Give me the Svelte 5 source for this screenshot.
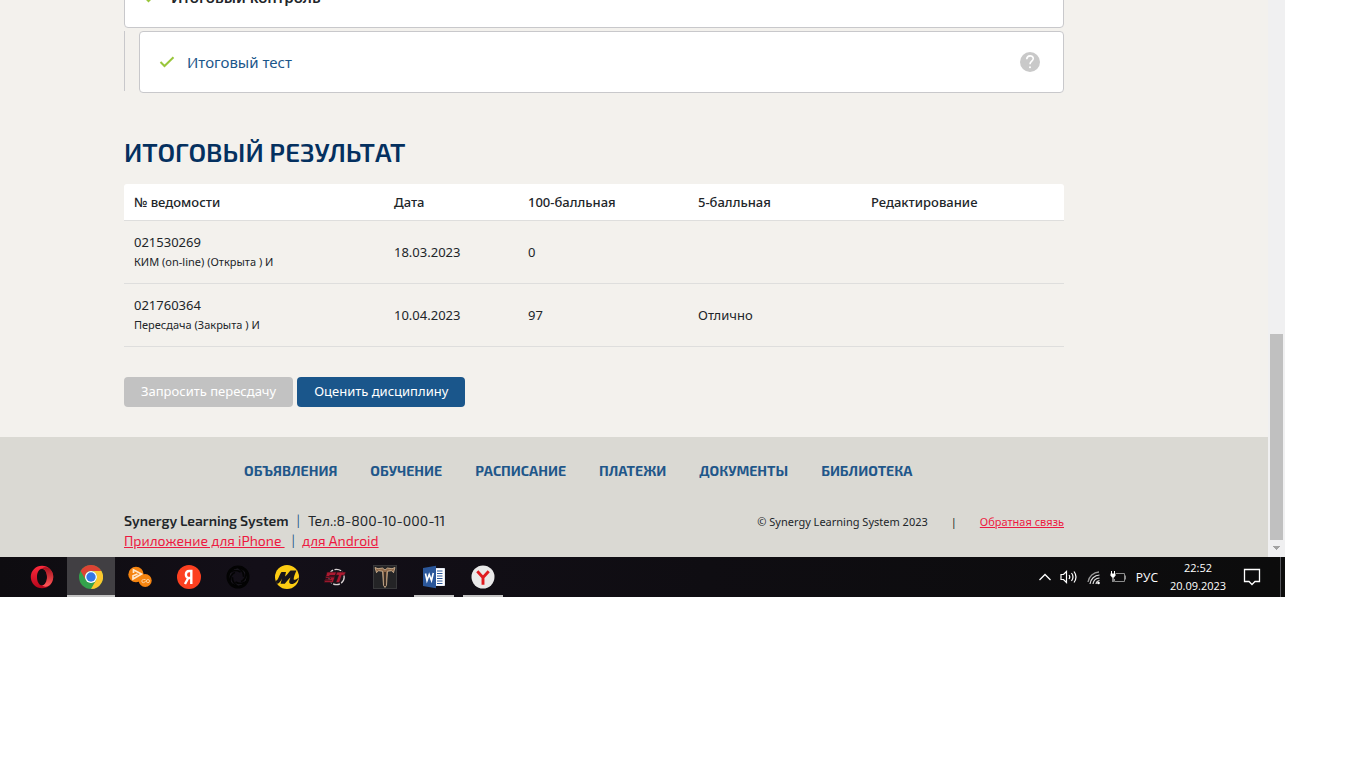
<script>
  const columns = [
    { label: '№ ведомости', width: 260 },
    { label: 'Дата', width: 134 },
    { label: '100-балльная', width: 170 },
    { label: '5-балльная', width: 173 },
    { label: 'Редактирование', width: null }
  ];
  const results = [
    { number: '021530269', note: 'КИМ (on-line) (Открыта ) И', date: '18.03.2023', score: '0', grade: '' },
    { number: '021760364', note: 'Пересдача (Закрыта ) И', date: '10.04.2023', score: '97', grade: 'Отлично' }
  ];
  const menu = ['Объявления', 'Обучение', 'Расписание', 'Платежи', 'Документы', 'Библиотека'];
  const apps = [
    { id: 'opera', name: 'Opera' },
    { id: 'chrome', name: 'Chrome', active: true },
    { id: 'player', name: 'Player' },
    { id: 'yandex', name: 'Яндекс' },
    { id: 'shutter', name: 'Shutter' },
    { id: 'market', name: 'M' },
    { id: 'bt', name: 'BT' },
    { id: 'tera', name: 'T' },
    { id: 'word', name: 'Word', open: true },
    { id: 'browser', name: 'Yandex Browser', open: true }
  ];
</script>

{#snippet check()}
  <svg class="check" width="16" height="12" viewBox="0 0 16 12" aria-hidden="true">
    <path d="M1.500 6l4 4L14.500 1.300" fill="none" stroke="#99c63b" stroke-width="2" />
  </svg>
{/snippet}

<div class="desktop">
  <div class="viewport">
    <div class="page">
      <main>
        <div class="lessons">
          <div class="card"><span class="mark">{@render check()}</span><strong>Итоговый контроль</strong></div>
          <div class="nested">
            <div class="card">
              <span class="mark">{@render check()}</span>
              <a href="#test">Итоговый тест</a>
              <button class="help" aria-label="Справка">
                <svg width="20" height="20" viewBox="0 0 20 20" aria-hidden="true">
                  <circle cx="10" cy="10" r="10" fill="#c9c9c9" />
                  <path d="M6.700 7.300C6.900 2.700 13.300 2.900 13.300 6.600c0 2.500-3.300 2.700-3.300 5.600" fill="none" stroke="#fff" stroke-width="1.600" />
                  <circle cx="10" cy="15.200" r="1" fill="#fff" />
                </svg>
              </button>
            </div>
          </div>
        </div>

        <h1>Итоговый результат</h1>
        <table>
          <colgroup>
            {#each columns as c}<col style:width={c.width ? `${c.width}px` : 'auto'} />{/each}
          </colgroup>
          <thead>
            <tr>{#each columns as c}<th scope="col">{c.label}</th>{/each}</tr>
          </thead>
          <tbody>
            {#each results as r}
              <tr>
                <td>{r.number}<small>{r.note}</small></td>
                <td>{r.date}</td>
                <td>{r.score}</td>
                <td>{r.grade}</td>
                <td></td>
              </tr>
            {/each}
          </tbody>
        </table>
        <div class="actions">
          <button disabled>Запросить пересдачу</button>
          <button>Оценить дисциплину</button>
        </div>
      </main>

      <footer>
        <nav>
          {#each menu as item}<a href="#menu">{item}</a>{/each}
        </nav>
        <div class="info">
          <div class="contacts">
            <div><b>Synergy Learning System</b><i>|</i><span>Тел.:8-800-10-000-11</span></div>
            <div class="apps"><a href="#iphone">Приложение для iPhone&nbsp;</a><i>|</i><a href="#android">для Android</a></div>
          </div>
          <div class="legal"><span>© Synergy Learning System 2023</span><span>|</span><a href="#feedback">Обратная связь</a></div>
        </div>
      </footer>
    </div>
    <div class="scrollbar" aria-hidden="true">
      <div class="thumb"></div>
      <svg width="17" height="17" viewBox="0 0 17 17"><path d="M5 6h7v1h-1v1h-1v1h-1v1H8V9H7V8H6V7H5z" fill="#a3a3a3" /></svg>
    </div>
  </div>

  <div class="taskbar">
    <div class="programs">
      {#each apps as app}
        <button class:active={app.active} class:open={app.open} aria-label={app.name}>
          <svg width="24" height="24" viewBox="0 0 24 24" aria-hidden="true">
            {#if app.id === 'opera'}
              <defs>
                <linearGradient id="op1" x1="0" y1="0" x2="0" y2="1"><stop stop-color="#ff2a3c" /><stop offset="1" stop-color="#b5061b" /></linearGradient>
                <linearGradient id="op2" x1="0" y1="0" x2="0" y2="1"><stop stop-color="#a5101c" /><stop offset="1" stop-color="#ff5a5a" /></linearGradient>
              </defs>
              <path fill-rule="evenodd" d="M12 .8a11.200 11.200 0 1 0 0 22.400 11.200 11.200 0 0 0 0-22.400zM12 3.700c3 0 5 3.700 5 8.300s-2 8.300-5 8.300-5-3.700-5-8.300 2-8.300 5-8.300z" fill="url(#op1)" />
              <path d="M12 3.700C14 1.800 17 2 19.200 3.400a11.200 11.200 0 0 1 0 17.200C17 22 14 22.200 12 20.300c3 0 5-3.700 5-8.300s-2-8.300-5-8.300z" fill="url(#op2)" />
            {:else if app.id === 'chrome'}
              <circle cx="12" cy="12" r="12" fill="#34a24c" />
              <path d="M1.600 6A12 12 0 0 1 22.400 6H12a6 6 0 0 0-5.200 9z" fill="#dd4334" />
              <path d="M22.400 6A12 12 0 0 1 12 24l5.200-9A6 6 0 0 0 12 6z" fill="#fdc72e" />
              <circle cx="12" cy="12" r="6" fill="#fff" />
              <circle cx="12" cy="12" r="4.700" fill="#3577e5" />
            {:else if app.id === 'player'}
              <circle cx="8" cy="9.500" r="7.700" fill="#f58410" />
              <circle cx="17.200" cy="15.500" r="6.500" fill="#f58410" />
              <path d="M5.500 8V4.800L13.500 9 5 14v-3.200L9.500 9" fill="none" stroke="#ffe8cd" stroke-width="1.700" />
              <path d="M17.500 14.500h-2a1.600 1.600 0 1 0 1.500 1.800h.8M20 14.500a1.600 1.600 0 1 1-.1 3.200 1.600 1.600 0 0 1 .1-3.200z" fill="none" stroke="#ffcf98" stroke-width="1" />
            {:else if app.id === 'yandex'}
              <circle cx="12" cy="12" r="12" fill="#fc4020" />
              <path d="M14.300 19V6h-2c-4.500 0-4.500 7-.2 7h2.200M11.500 12.500L8 19" fill="none" stroke="#fff" stroke-width="2.400" />
            {:else if app.id === 'shutter'}
              <circle cx="12" cy="12" r="10" fill="none" stroke="#030303" stroke-width="3" />
              <circle cx="12" cy="12" r="8" fill="none" stroke="#201e24" stroke-width=".7" />
              <g fill="none" stroke="#030303" stroke-width="1.600">
                {#each [0, 60, 120, 180, 240, 300] as turn}<path d="M4.500 7q5-3 10 0" transform="rotate({turn} 12 12)" />{/each}
              </g>
            {:else if app.id === 'market'}
              <circle cx="12" cy="12" r="12" fill="#fccc12" />
              <path d="M.5 16C3.500 15.500 4.500 9 6.500 7H11L10 11.500C12 10 13.500 7.500 15.500 5.500H21.500C20 9 18.500 12.500 18.700 14.500 20.500 15.500 22 14 24 12.500 22 17 18 20.500 15 18.500 13.500 17.500 14.500 14.500 15.500 12.500 13 14.500 11.500 17 9.800 18.800H5.500L7 13.500C5.500 16.500 3.500 20 1.500 18.500z" fill="#18151a" />
            {:else if app.id === 'bt'}
              <circle cx="12.500" cy="12" r="7.700" fill="#18151b" stroke="#d8d1d3" stroke-width="1.300" stroke-dasharray="7 1.500" />
              <path d="M3 7h10l-1.500 3.500H5.500L4.800 12H11l-2 5.500H0l1.200-3.300H6l.5-1H1.300zM12.500 7H22l-1.700 3.300h-2.500L15.500 17.500h-3.700l2.700-7.200h-3.200z" fill="#ad1930" stroke="#241018" stroke-width=".7" />
              <path d="M2 11.500h9M0 15.700h8" stroke="#4b101b" />
            {:else if app.id === 'tera'}
              <path d="M0 0h24v24H0z" fill="#38383a" />
              <path d="M1 1h22v22H1z" fill="#242426" />
              <path d="M2 2.500l3 1.200 4.500-.7L12 5l2.500-2 4.500.7 3-1.200-1.500 5.200-2-2-4 .6-1 14-1.500 2.200-1.500-2.200-1-14-4-.6-2 2z" fill="#8e694b" stroke="#e8cba8" stroke-width=".7" />
              <path d="M12 7v14" stroke="#1b1817" stroke-width="1.400" />
            {:else if app.id === 'word'}
              <path d="M13 3.500h9.500v17H13z" fill="#fff" stroke="#e4eaf4" />
              <path d="M15 6h5.500M15 8.500h5.500M15 11h5.500M15 13.500h5.500M15 16h5.500M15 18.500h5.500" stroke="#2b579a" />
              <path d="M1 3L14 .7v22.600L1 21z" fill="#2b579a" />
              <path d="M3.500 8.500l1.500 7 2.200-6 2.300 6 1.800-7.500" fill="none" stroke="#fff" stroke-width="1.600" />
            {:else}
              <circle cx="12" cy="12" r="11.500" fill="#e9e9e9" />
              <path d="M6.300 6.300L12 12.500v7.300M17.700 6.300L12 12.500" fill="none" stroke="#e01c20" stroke-width="2.900" />
            {/if}
          </svg>
        </button>
      {/each}
    </div>
    <div class="tray">
      <svg width="12" height="16" viewBox="0 0 12 16" aria-hidden="true"><path d="M.5 11L6 5.500 11.500 11" fill="none" stroke="#fff" stroke-width="1.300" /></svg>
      <svg width="18" height="16" viewBox="0 0 18 16" aria-hidden="true">
        <path d="M1 5.500h2.500L6.500 2.500v11l-3-3H1zM9 6q1.500 2 0 4M11.500 4q3 4 0 8M14 2.500q4 5.500 0 11" fill="none" stroke="#fff" stroke-width="1.200" />
      </svg>
      <svg width="14" height="16" viewBox="0 0 14 16" aria-hidden="true">
        <path d="M1 13A12 12 0 0 1 12 3" fill="none" stroke="#999" stroke-width="1.300" />
        <path d="M3 15A10 10 0 0 1 12.500 6M6 15a7 7 0 0 1 6.500-6M9 15a4 4 0 0 1 3.500-3.500" fill="none" stroke="#ddd" stroke-width="1.200" />
        <circle cx="11.500" cy="14" r="1.300" fill="#fff" />
      </svg>
      <svg width="17" height="16" viewBox="0 0 17 16" aria-hidden="true">
        <path d="M6 4.500h8.500v8H4.500V10M15.500 6.500v4" fill="none" stroke="#8c8c8c" />
        <path d="M1.500 2v3M4.500 2v3M3 8v5" stroke="#fff" /><path d="M.5 4.500h5v2L4 8.500H2L.5 6.500z" fill="#fff" />
      </svg>
      <span class="lang">РУС</span>
      <div class="clock"><span>22:52</span><span>20.09.2023</span></div>
      <svg width="18" height="18" viewBox="0 0 18 18" aria-hidden="true"><path d="M1.500 1.500h15v12H12l-3 3-3-3H1.500z" fill="none" stroke="#fff" stroke-width="1.300" /></svg>
    </div>
  </div>
</div>

<style>
  :global(body) {
    margin: 0;
    background: #fff;
  }
  .desktop {
    margin-right: 81px;
    overflow: hidden;
    font-family: "Noto Sans", "Open Sans", sans-serif;
    font-size: 13px;
    color: #212529;
  }
  button {
    border: 0;
    padding: 0;
    font: inherit;
  }
  svg {
    display: block;
    flex: none;
  }
  .viewport {
    display: flex;
  }
  .page {
    flex: 1;
    min-width: 0;
    background: #f3f1ed;
  }
  main {
    padding: 0 204px 30px 124px;
  }
  .lessons {
    display: flex;
    flex-direction: column;
    gap: 3px;
    margin-top: -34px;
  }
  .card {
    display: flex;
    align-items: center;
    box-sizing: border-box;
    min-height: 62px;
    flex: 1;
    padding: 0 23px 0 19px;
    border: 1px solid #c8c8cb;
    border-radius: 4px;
    background: #fff;
    font-size: 15px;
  }
  .card strong {
    font-weight: 600;
  }
  .mark {
    width: 28px;
  }
  .card a {
    color: #1b568a;
    text-decoration: none;
  }
  .lessons > .card {
    padding-left: 18px;
  }
  .nested {
    display: flex;
    padding-left: 15px;
    background: linear-gradient(#c8c8cb, #c8c8cb) 0 0 / 1px 60px no-repeat;
  }
  .help {
    margin-left: auto;
    background: none;
  }
  h1 {
    margin: 41px 0 14px;
    font: 600 26px/36px "Exo 2", Roboto, sans-serif;
    text-transform: uppercase;
    color: #04305f;
  }
  table {
    width: 100%;
    table-layout: fixed;
    border-spacing: 0;
    line-height: 20px;
  }
  th {
    height: 36px;
    padding: 0 10px;
    border-bottom: 1px solid #dededd;
    background: #fff;
    text-align: left;
    font-weight: 500;
  }
  th:first-child {
    border-top-left-radius: 3px;
  }
  th:last-child {
    border-top-right-radius: 3px;
  }
  td {
    height: 62px;
    padding: 0 10px;
    border-bottom: 1px solid #dededd;
  }
  small {
    display: block;
    font-size: 11px;
  }
  .actions {
    display: flex;
    gap: 4px;
    margin-top: 30px;
  }
  .actions button {
    height: 30px;
    padding: 0 17px 2px;
    border-radius: 4px;
    background: #1a568b;
    color: #fff;
  }
  .actions button:disabled {
    background: #c2c2c2;
  }
  footer {
    box-sizing: border-box;
    height: 120px;
    padding: 24px 204px 0 120px;
    background: #dad9d3;
    font-family: "Exo 2", Roboto, sans-serif;
  }
  nav {
    display: flex;
    gap: 33px;
    padding-left: 124px;
    line-height: 20px;
    font-size: 14px;
    font-weight: 700;
    text-transform: uppercase;
  }
  nav a {
    color: #1f578a;
    text-decoration: none;
  }
  .info {
    display: flex;
    justify-content: space-between;
    margin-top: 30px;
    padding-left: 4px;
    line-height: 20px;
  }
  .contacts {
    font-size: 14px;
  }
  .contacts b {
    font-weight: 600;
  }
  .contacts i {
    margin: 0 8px;
    font-style: normal;
    color: #1f578a;
  }
  .contacts .apps i {
    margin: 0 7px;
  }
  .info a {
    color: #ed1941;
  }
  .legal {
    display: flex;
    gap: 23px;
    font-family: "Noto Sans", "Open Sans", sans-serif;
    font-size: 11px;
    line-height: 22px;
  }
  .scrollbar {
    display: flex;
    flex-direction: column;
    justify-content: flex-end;
    width: 17px;
    background: #f0f0f1;
  }
  .thumb {
    height: 206px;
    margin: 0 2px;
    background: #c0c0c0;
  }
  .taskbar {
    display: flex;
    justify-content: space-between;
    height: 40px;
    background: linear-gradient(90deg, #0e0c10, #130f18 20%, #0f0d12 55%, #0c0c0c);
    color: #fff;
  }
  .programs {
    display: flex;
    gap: 1px;
    padding-left: 18px;
  }
  .programs button {
    display: grid;
    place-items: center;
    width: 48px;
    background: none;
  }
  .programs .active {
    background: linear-gradient(#c3c3c3, #c3c3c3) 0 100% / 100% 2px no-repeat, #413f43;
  }
  .programs .open {
    background: linear-gradient(#c3c3c3, #c3c3c3) 50% 100% / 40px 2px no-repeat;
  }
  .tray {
    display: flex;
    align-items: center;
    gap: 9px;
    padding-right: 19px;
    margin-right: 4px;
    border-right: 1px solid #55555a;
    font-family: "Open Sans", sans-serif;
    font-size: 12px;
  }
  .clock {
    display: flex;
    flex-direction: column;
    width: 62px;
    margin-right: 5px;
    line-height: 18px;
    font-size: 11px;
    text-align: center;
  }
</style>
